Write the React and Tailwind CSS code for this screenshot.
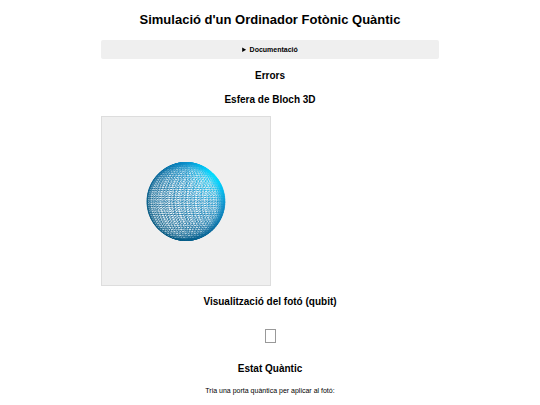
import React, { useState } from 'react';

const SPHERE_RADIUS = 39;
const SPHERE_ROWS = 46;
const SPHERE_COLS = 60;

// Orthographic projection of the front half of the sphere
const project = (row, col) => {
  const lat = (row / SPHERE_ROWS) * Math.PI;
  const lon = (col / SPHERE_COLS) * Math.PI * 2;
  const x = -SPHERE_RADIUS * Math.sin(lat) * Math.cos(lon);
  const y = -SPHERE_RADIUS * Math.cos(lat);
  return `${x.toFixed(2)} ${y.toFixed(2)}`;
};

const buildMesh = () => {
  let d = '';
  for (let row = 0; row < SPHERE_ROWS; row++) {
    for (let col = 0; col < SPHERE_COLS / 2; col++) {
      d += `M${project(row, col)}L${project(row + 1, col)}L${project(row, col + 1)}L${project(row, col)}`;
    }
  }
  return d;
};

// Bright gaps between the wires, one broken line per pair of rows
const buildGaps = () => {
  let d = '';
  for (let y = -36; y <= 36; y += 2) {
    const half = Math.sqrt(SPHERE_RADIUS * SPHERE_RADIUS - y * y) - 1;
    d += `M${(-half).toFixed(2)} ${y}H${half.toFixed(2)}`;
  }
  return d;
};

const mesh = buildMesh();
const gaps = buildGaps();

const BlochSphere = () => (
  <svg viewBox="-84 -84 168 168" className="block w-full" role="img" aria-label="Esfera de Bloch">
    <defs>
      <radialGradient id="light" gradientUnits="userSpaceOnUse" cx="33" cy="-30" r="84">
        <stop offset="0" stopColor="#00ecff" />
        <stop offset="0.15" stopColor="#00ccfa" />
        <stop offset="0.4" stopColor="#0a90cc" />
        <stop offset="0.7" stopColor="#086a9e" />
        <stop offset="1" stopColor="#055880" />
      </radialGradient>
      <radialGradient id="rim" gradientUnits="userSpaceOnUse" cx="-3" cy="1" r="42">
        <stop offset="0.82" stopColor="#fff" stopOpacity="0" />
        <stop offset="0.99" stopColor="#fff" stopOpacity="1" />
      </radialGradient>
      <mask id="rimMask" maskUnits="userSpaceOnUse" x="-42" y="-42" width="84" height="84">
        <circle r={SPHERE_RADIUS} fill="url(#rim)" />
      </mask>
      <radialGradient id="gap" gradientUnits="userSpaceOnUse" cx="-3" cy="2" r="39">
        <stop offset="0.4" stopColor="#fff" stopOpacity="0.85" />
        <stop offset="0.8" stopColor="#fff" stopOpacity="0.6" />
        <stop offset="1" stopColor="#fff" stopOpacity="0.15" />
      </radialGradient>
    </defs>
    <g transform="translate(0 0.5)">
      <circle r={SPHERE_RADIUS} fill="#cfdfe7" />
      <path d={mesh} fill="none" stroke="url(#light)" strokeWidth="0.45" />
      <path
        d={mesh}
        fill="none"
        stroke="url(#light)"
        strokeWidth="0.4"
        strokeOpacity="0.4"
        shapeRendering="crispEdges"
      />
      <path
        d={gaps}
        fill="none"
        stroke="url(#gap)"
        strokeWidth="1"
        strokeDasharray="1 1.4 2 1.2 1 2.3"
      />
      <path d="M-38 0H38M0.5 -38V38" stroke="#1579ab" strokeOpacity="0.2" />
      <circle r={SPHERE_RADIUS} fill="url(#light)" mask="url(#rimMask)" />
    </g>
  </svg>
);

const SectionTitle = ({ children }) => (
  <h2 className="text-center text-[10px] leading-3 font-bold">{children}</h2>
);

const App = () => {
  const [open, setOpen] = useState(false);

  return (
    <main className="w-5/8 mx-auto pt-3 text-black font-['Liberation_Sans',Arial,sans-serif]">
      <h1 className="text-center text-[13px] leading-4 font-bold whitespace-nowrap">
        Simulació d'un Ordinador Fotònic Quàntic
      </h1>

      <details
        open={open}
        onToggle={(e) => setOpen(e.currentTarget.open)}
        className="mt-3 py-1.5 rounded-xs bg-[#efefef]"
      >
        <summary className="text-center text-[7px] leading-[7px] font-bold cursor-pointer">
          Documentació
        </summary>
      </details>

      <div className="mt-[11px] flex flex-col gap-3">
        <SectionTitle>Errors</SectionTitle>
        <SectionTitle>Esfera de Bloch 3D</SectionTitle>
      </div>

      <div className="mt-2.5 w-[170px] border border-[#dddddd] bg-[#efefef]">
        <BlochSphere />
      </div>

      <div className="mt-2.5">
        <SectionTitle>Visualització del fotó (qubit)</SectionTitle>
      </div>

      <div className="mt-[21px] mx-auto w-[11px] h-3.5 border border-[#999999]" />

      <div className="mt-5">
        <SectionTitle>Estat Quàntic</SectionTitle>
      </div>
      <p className="mt-3 text-center text-[7px] leading-2">
        Tria una porta quàntica per aplicar al fotó:
      </p>
    </main>
  );
};

export default App;
